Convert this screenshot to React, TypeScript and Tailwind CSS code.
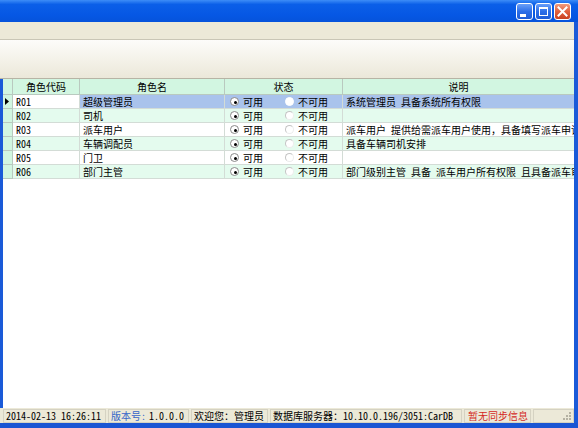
import React from "react";

const FONT = '"Noto Sans Mono CJK SC","Noto Sans CJK SC","Liberation Mono",monospace';

type Row = { code: string; name: string; desc: string; selected?: boolean };
const rows: Row[] = [
  { code: "R01", name: "超级管理员", desc: "系统管理员 具备系统所有权限", selected: true },
  { code: "R02", name: "司机", desc: "" },
  { code: "R03", name: "派车用户", desc: "派车用户 提供给需派车用户使用，具备填写派车申请" },
  { code: "R04", name: "车辆调配员", desc: "具备车辆司机安排" },
  { code: "R05", name: "门卫", desc: "" },
  { code: "R06", name: "部门主管", desc: "部门级别主管 具备 派车用户所有权限 且具备派车审批" },
];

function Radio({ checked, white }: { checked?: boolean; white?: boolean }) {
  return (
    <span
      className={`relative inline-block w-[9px] h-[9px] rounded-full border ${
        checked
          ? "border-[#8a8a8a] bg-white"
          : white
          ? "border-white bg-white"
          : "border-t-[#c4c4c4] border-l-[#c4c4c4] border-r-[#ececec] border-b-[#ececec] bg-white"
      }`}
    >
      {checked && <span className="absolute left-[2.5px] top-[2.5px] w-[3px] h-[3px] rounded-full bg-black" />}
    </span>
  );
}

function TitleButton({ kind }: { kind: "min" | "max" | "close" }) {
  const close = kind === "close";
  return (
    <div
      className={`w-[17px] h-[17px] rounded-[3px] border border-white flex items-center justify-center ${
        close
          ? "bg-gradient-to-b from-[#f09a7c] via-[#e0603e] to-[#c8401f]"
          : "bg-gradient-to-b from-[#6a9ff8] via-[#2b6ee8] to-[#1f5cd6]"
      }`}
    >
      {kind === "min" && <div className="w-[6px] h-[3px] bg-white mt-[7px] mr-[3px]" />}
      {kind === "max" && <div className="w-[9px] h-[9px] border border-white border-t-[2px]" />}
      {kind === "close" && (
        <svg width="11" height="11" viewBox="0 0 11 11">
          <path d="M1.5 1.5 L9.5 9.5 M9.5 1.5 L1.5 9.5" stroke="white" strokeWidth="2" strokeLinecap="square" />
        </svg>
      )}
    </div>
  );
}

export default function App() {
  return (
    <div
      className="w-[578px] h-[428px] flex flex-col overflow-hidden bg-white text-black"
      style={{ fontFamily: FONT }}
    >
      {/* Title bar */}
      <div className="h-[22px] shrink-0 flex items-start justify-end pt-[3px] pr-[7px] gap-[2px] bg-[linear-gradient(to_bottom,#3d8df7_0%,#0b5fe8_20%,#0657e4_70%,#0653db_100%)]">
        <TitleButton kind="min" />
        <TitleButton kind="max" />
        <TitleButton kind="close" />
      </div>

      <div className="flex-1 flex min-h-0">
        <div className="flex-1 flex flex-col min-w-0">
          {/* Menu strip */}
          <div className="h-[18px] shrink-0 bg-[#ece9d8] border-b border-[#c9c6b6]" />
          {/* Toolbar */}
          <div className="h-[39px] shrink-0 bg-gradient-to-b from-[#fdfcfa] to-[#ebe8d9] border-b border-[#b7b4a5]" />

          <div className="flex-1 flex min-h-0">
            {/* left blue strip */}
            <div className="w-[3px] bg-[#1a5ad8]" />
            <div className="flex-1 flex flex-col min-w-0 bg-white">
              {/* Grid */}
              <div className="text-[10px] leading-none">
                <div className="grid grid-cols-[10px_67px_145px_118px_1fr] h-[16px] bg-[#d2f6e1]">
                  <div className="border-r border-b border-[#b9c9bf]" />
                  <div className="border-r border-b border-[#b9c9bf] flex items-center justify-center">角色代码</div>
                  <div className="border-r border-b border-[#b9c9bf] flex items-center justify-center">角色名</div>
                  <div className="border-r border-b border-[#b9c9bf] flex items-center justify-center">状态</div>
                  <div className="border-b border-[#b9c9bf] flex items-center justify-center">说明</div>
                </div>
                {rows.map((r, i) => {
                  const even = i % 2 === 1;
                  const bg = r.selected ? "bg-[#a9c3ec]" : even ? "bg-[#e4fbee]" : "bg-white";
                  return (
                    <div key={r.code} className="grid grid-cols-[10px_67px_145px_118px_1fr] h-[14px]">
                      <div className="bg-[#d2f6e1] border-r border-b border-[#b9c9bf] flex items-center pl-[2px]">
                        {r.selected && (
                          <svg width="4" height="7" viewBox="0 0 4 7">
                            <path d="M0 0 L4 3.5 L0 7 Z" fill="black" />
                          </svg>
                        )}
                      </div>
                      <div className={`${r.selected ? "bg-white" : even ? "bg-[#e4fbee]" : "bg-white"} border-r border-b border-[#d3dcd6] flex items-center pl-[3px]`}>
                        {r.code}
                      </div>
                      <div className={`${bg} border-r border-b border-[#d3dcd6] flex items-center pl-[3px]`}>{r.name}</div>
                      <div className={`${bg} border-r border-b border-[#d3dcd6] flex items-center pl-[5px]`}>
                        <Radio checked />
                        <span className="ml-[4px]">可用</span>
                        <span className="ml-[22px] flex items-center">
                          <Radio white={r.selected} />
                        </span>
                        <span className="ml-[4px]">不可用</span>
                      </div>
                      <div className={`${bg} border-b border-[#d3dcd6] flex items-center pl-[3px] whitespace-nowrap overflow-hidden`}>
                        {r.desc}
                      </div>
                    </div>
                  );
                })}
              </div>
              <div className="flex-1" />
            </div>
          </div>

          {/* Status bar */}
          <div className="h-[15px] shrink-0 bg-[#ece9d8] flex items-stretch text-[10px] leading-none pt-[1px] pl-[3px] gap-[2px]">
            <div className="w-[103px] border border-[#d5d2c2] flex items-center pl-[2px]">2014-02-13 16:26:11</div>
            <div className="w-[81px] border border-[#d5d2c2] flex items-center pl-[2px]">
              <span className="text-[#3565c9]">版本号</span>
              <span className="text-[#3565c9]">:</span>
              <span className="ml-[3px]">1.0.0.0</span>
            </div>
            <div className="w-[77px] border border-[#d5d2c2] flex items-center pl-[2px]">欢迎您：管理员</div>
            <div className="w-[192px] border border-[#d5d2c2] flex items-center pl-[2px]">数据库服务器：10.10.0.196/3051:CarDB</div>
            <div className="w-[67px] border border-[#d5d2c2] flex items-center pl-[3px] text-[#d42a1e]">暂无同步信息</div>
            <div className="flex-1 border border-[#d5d2c2] flex items-end justify-end pr-[1px] pb-[1px]">
              <svg width="9" height="9" viewBox="0 0 9 9">
                <rect x="6" y="0" width="2" height="2" fill="#b5b2a3" />
                <rect x="3" y="3" width="2" height="2" fill="#b5b2a3" />
                <rect x="6" y="3" width="2" height="2" fill="#b5b2a3" />
                <rect x="0" y="6" width="2" height="2" fill="#b5b2a3" />
                <rect x="3" y="6" width="2" height="2" fill="#b5b2a3" />
                <rect x="6" y="6" width="2" height="2" fill="#b5b2a3" />
              </svg>
            </div>
          </div>
        </div>
        {/* right frame */}
        <div className="w-[4px] bg-[#1a5ad8]" />
      </div>
      {/* bottom frame */}
      <div className="h-[5px] shrink-0 bg-[#1a55d3]" />
    </div>
  );
}
